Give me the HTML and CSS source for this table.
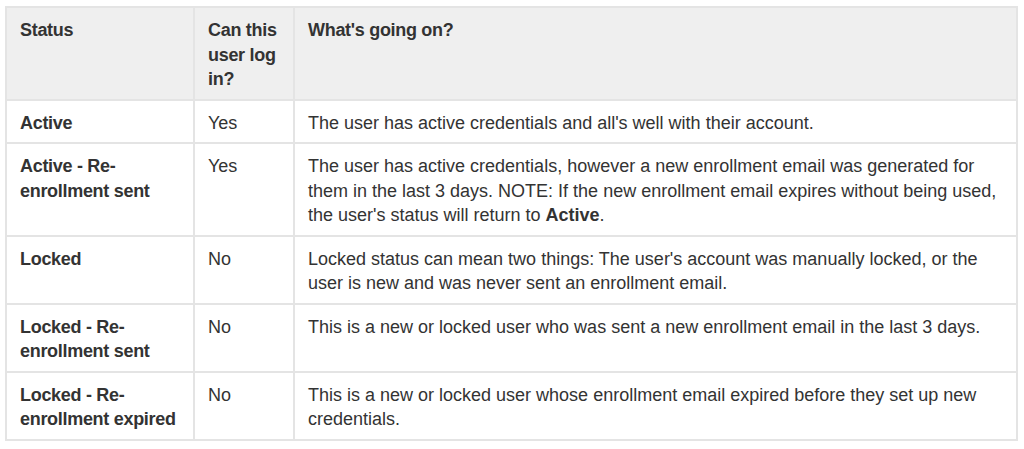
FILE: index.html
```html
<!DOCTYPE html>
<html>
<head>
<meta charset="utf-8">
<link rel="stylesheet" href="styles.css">
</head>
<body>
<div class="page">
<table class="status-table">
  <colgroup>
    <col class="c1"><col class="c2"><col class="c3">
  </colgroup>
  <thead>
    <tr><th>Status</th><th>Can this user log in?</th><th>What's going on?</th></tr>
  </thead>
  <tbody>
    <tr><td class="name">Active</td><td>Yes</td><td>The user has active credentials and all's well with their account.</td></tr>
    <tr><td class="name">Active - Re-enrollment sent</td><td>Yes</td><td>The user has active credentials, however a new enrollment email was generated for them in the last 3 days. NOTE: If the new enrollment email expires without being used, the user's status will return to <b>Active</b>.</td></tr>
    <tr><td class="name">Locked</td><td>No</td><td>Locked status can mean two things: The user's account was manually locked, or the user is new and was never sent an enrollment email.</td></tr>
    <tr><td class="name">Locked - Re-enrollment sent</td><td>No</td><td>This is a new or locked user who was sent a new enrollment email in the last 3 days.</td></tr>
    <tr><td class="name">Locked - Re-enrollment expired</td><td>No</td><td>This is a new or locked user whose enrollment email expired before they set up new credentials.</td></tr>
  </tbody>
</table>
</div>
</body>
</html>
```
FILE: styles.css
```css
html, body {
  margin: 0;
  padding: 0;
  background: #fff;
}
.page {
  padding: 6px 0 0 5px;
}
.status-table {
  border-collapse: collapse;
  table-layout: fixed;
  width: 1013px;
  font-family: "Liberation Sans", Arial, sans-serif;
  font-size: 18px;
  line-height: 24.5px;
  color: #333;
  border: 2px solid #e4e4e4;
}
.c1 { width: 188px; }
.c2 { width: 100px; }
.c3 { width: auto; }
.status-table th,
.status-table td {
  border: 2px solid #e4e4e4;
  padding: 10px 12px 7px 13px;
  text-align: left;
  vertical-align: top;
}
.status-table th {
  background: #efefef;
  font-weight: bold;
  letter-spacing: -0.3px;
}
.status-table td.name {
  font-weight: bold;
  letter-spacing: -0.3px;
}
```
